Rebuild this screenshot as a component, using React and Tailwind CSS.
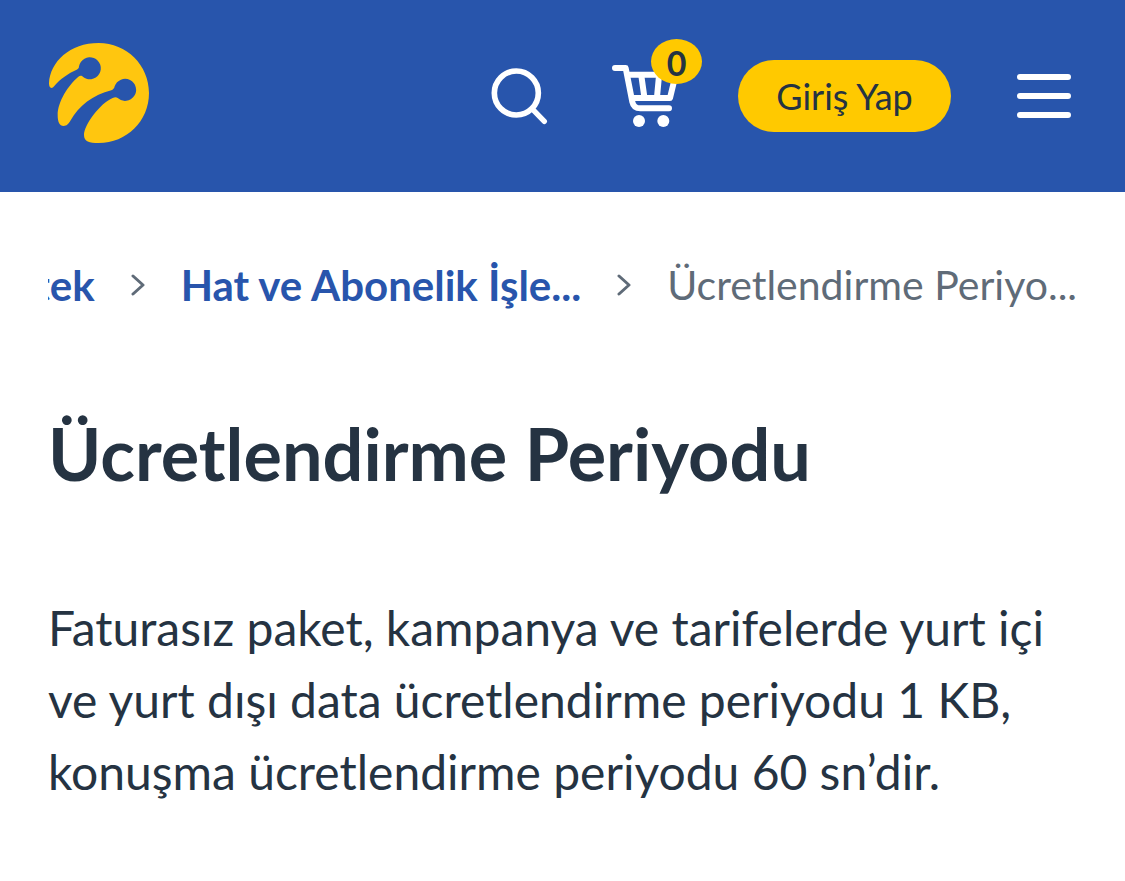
import React from "react";

function Logo() {
  return (
    <svg viewBox="54 51 306 306" className="size-[102px]" aria-hidden="true">
      <path
        fill="#ffc60f"
        d="M57 175C60 110 120 54 206 54C290 54 357 120 357 204C357 288 290 354 206 354C178 354 162 350 162 330C162 300 210 235 248 219C255 216 260 217 263 219A33 33 0 1 0 254 184C253 191 249 194 244 196C190 208 145 245 122 286C115 298 110 303 101 303C88 303 83 290 83 270C83 230 115 180 145 155C149 152 154 152 157 154A33 33 0 1 0 147 124C147 129 145 132 140 134C115 145 90 162 73 183C66 192 57 191 57 175Z"
      />
    </svg>
  );
}

function SearchIcon() {
  return (
    <svg viewBox="60 126 174 174" className="size-[58px]" fill="none" stroke="#fff" strokeLinecap="round" aria-hidden="true">
      <circle cx="139" cy="204" r="66" strokeWidth="17" />
      <path d="M188 253L223 289" strokeWidth="16" />
    </svg>
  );
}

function CartIcon() {
  return (
    <svg viewBox="420 114 210 198" className="h-[66px] w-[70px]" fill="none" stroke="#fff" strokeWidth="18" strokeLinecap="round" strokeLinejoin="round" aria-hidden="true">
      <path d="M435 129H467L487 231Q491 250 511 250H597" />
      <path d="M475 149H617L600 219H490" />
      <path d="M514 152L523 216M567 152L561 216" strokeLinecap="butt" />
      <circle cx="507" cy="288" r="18" fill="#fff" stroke="none" />
      <circle cx="580" cy="288" r="18" fill="#fff" stroke="none" />
    </svg>
  );
}

function MenuIcon() {
  return (
    <svg viewBox="0 0 56 46" className="h-[46px] w-14" stroke="#fff" strokeWidth="6" strokeLinecap="round" aria-hidden="true">
      <path d="M4 4H52M4 23H52M4 42H52" />
    </svg>
  );
}

function Separator() {
  return (
    <svg viewBox="0 0 14 24" className="mx-9 h-6 w-3.5 shrink-0" fill="none" stroke="#5f6b78" strokeWidth="3" strokeLinecap="round" strokeLinejoin="round" aria-hidden="true">
      <path d="M2 3L12 12L2 21" />
    </svg>
  );
}

export default function App() {
  return (
    <div className="min-h-screen bg-white font-['Lato','Liberation_Sans',sans-serif] text-[#253342]">
      <header className="flex h-48 items-center justify-between bg-[#2855ac] pr-[53px] pl-12">
        <a href="#" aria-label="Ana sayfa" className="mb-1.5">
          <Logo />
        </a>
        <div className="flex items-center">
          <button type="button" aria-label="Ara" className="mr-[62px]">
            <SearchIcon />
          </button>
          <button type="button" aria-label="Sepet" className="relative mr-[58px]">
            <CartIcon />
            <span className="absolute -top-6 -right-[22px] flex h-[45px] w-[51px] items-center justify-center rounded-[50%] bg-[#ffc900] pt-0.5 text-[34px] leading-none font-bold">
              0
            </span>
          </button>
          <button type="button" className="mr-[65px] flex h-[72px] w-[213px] items-center justify-center rounded-full bg-[#ffc900] text-[36px] leading-none">
            Giriş Yap
          </button>
          <button type="button" aria-label="Menü">
            <MenuIcon />
          </button>
        </div>
      </header>

      <main className="px-12">
        <nav aria-label="Sayfa yolu" className="overflow-hidden pt-[63px]">
          <ol className="flex items-center justify-end text-[42px] leading-[60px] whitespace-nowrap">
            <li className="flex items-center font-bold text-[#2855ac]">
              <a href="#">Destek</a>
              <Separator />
            </li>
            <li className="flex items-center font-bold text-[#2855ac]">
              <a href="#">Hat ve Abonelik İşle...</a>
              <Separator />
            </li>
            <li aria-current="page" className="text-[41px] text-[#5f6b78]">Ücretlendirme Periyo...</li>
          </ol>
        </nav>
        <h1 className="mt-[90px] text-[72px] leading-[96px] font-bold">Ücretlendirme Periyodu</h1>
        <p className="mt-[91px] text-[48px] leading-[72px]">
          Faturasız paket, kampanya ve tarifelerde yurt içi ve yurt dışı data ücretlendirme periyodu 1 KB, konuşma ücretlendirme periyodu 60 sn’dir.
        </p>
      </main>
    </div>
  );
}
